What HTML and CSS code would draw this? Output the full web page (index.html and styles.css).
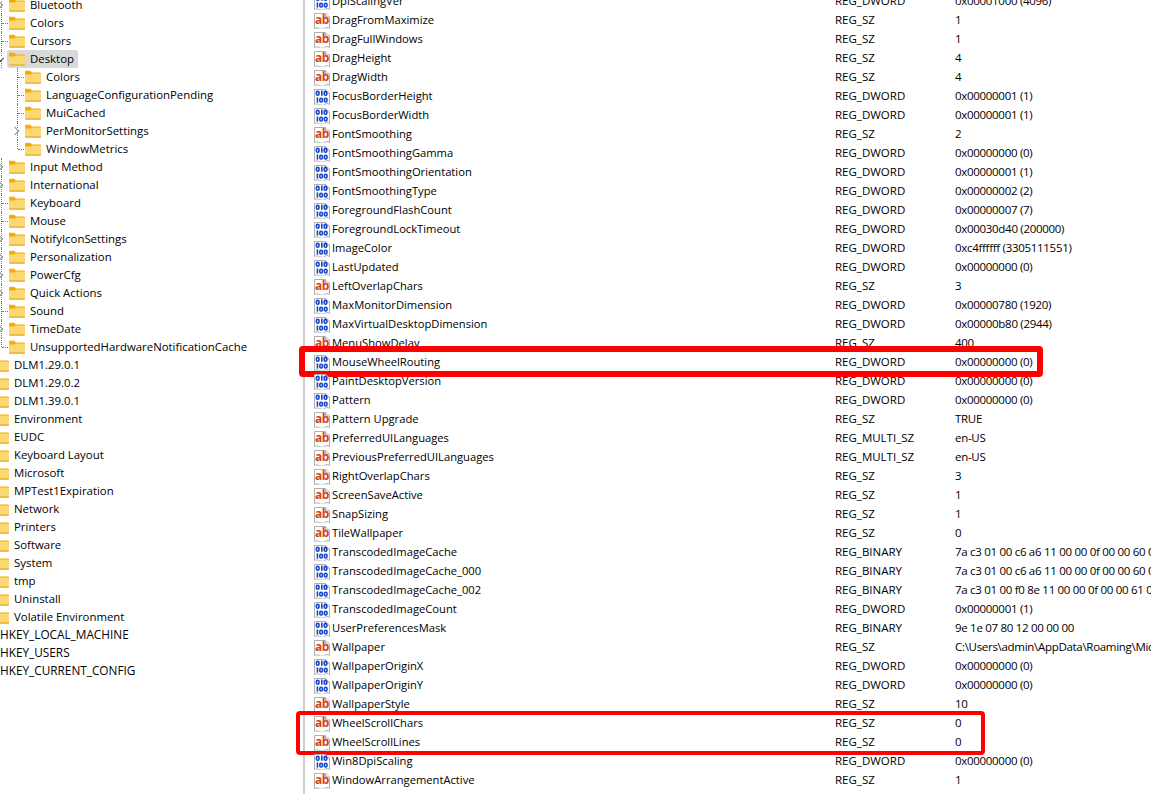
FILE: index.html
```html
<!DOCTYPE html>
<html lang="en">
<head>
<meta charset="utf-8">
<title>Registry Editor</title>
<link rel="stylesheet" href="styles.css">
</head>
<body>
<svg class="defs" width="0" height="0" aria-hidden="true">
  <symbol id="folder" viewBox="0 0 16 16">
    <path d="M0 3C0 2.3.5 1.8 1.2 1.8h4L7 3.4h8c.6 0 1 .4 1 1V6H0z" fill="#f5ad00"/>
    <path d="M0 5.4h5.6L7 4.4h8c.6 0 1 .4 1 1v8.4c0 .7-.5 1.2-1.2 1.2H1.2C.5 15 0 14.5 0 13.8z" fill="#fcd874"/>
    <path d="M0 13.6c0 .8.5 1.4 1.2 1.4h13.6c.7 0 1.2-.6 1.2-1.4V13H0z" fill="#f0bd45"/>
  </symbol>
  <symbol id="sheet" viewBox="0 0 16 16">
    <path d="M.5 .5h11l4 3.5v11.5c-2-1.3-3-1.3-5 0s-3 .8-5 0-3-.8-5 0z" fill="#fff" stroke="#b0b0b0"/>
    <path d="M11.5 .5v3.5h4" fill="#eee" stroke="#b0b0b0"/>
  </symbol>
  <symbol id="ab" viewBox="0 0 16 16">
    <use href="#sheet"/>
    <text x="1" y="10.8" class="ab-text">ab</text>
  </symbol>
  <symbol id="bin" viewBox="0 0 16 16">
    <use href="#sheet"/>
    <g fill="none" stroke="#1846c8" stroke-width="1.6">
      <rect x="2.4" y="2.4" width="2.6" height="3.8" rx="1.2"/>
      <path d="M7.8 1.6v5.2"/>
      <rect x="10.2" y="2.4" width="2.6" height="3.8" rx="1.2"/>
      <path d="M3.4 8.4v5.2"/>
      <rect x="5.8" y="9.2" width="2.6" height="3.8" rx="1.2"/>
      <rect x="10.4" y="9.2" width="2.6" height="3.8" rx="1.2"/>
    </g>
  </symbol>
</svg>
<main class="window">
  <nav class="tree">
    <div class="node lvl2 open-line"><span class="chev"></span><span class="label"><svg class="folder"><use href="#folder"/></svg>Bluetooth</span></div>
    <div class="node lvl2 leaf"><span class="label"><svg class="folder"><use href="#folder"/></svg>Colors</span></div>
    <div class="node lvl2 leaf"><span class="label"><svg class="folder"><use href="#folder"/></svg>Cursors</span></div>
    <div class="node lvl2"><span class="chev down"></span><span class="label selected"><svg class="folder"><use href="#folder"/></svg>Desktop</span></div>
    <div class="node lvl3 leaf sub"><span class="label"><svg class="folder"><use href="#folder"/></svg>Colors</span></div>
    <div class="node lvl3 leaf sub"><span class="label"><svg class="folder"><use href="#folder"/></svg>LanguageConfigurationPending</span></div>
    <div class="node lvl3 leaf sub"><span class="label"><svg class="folder"><use href="#folder"/></svg>MuiCached</span></div>
    <div class="node lvl3 sub"><span class="chev"></span><span class="label"><svg class="folder"><use href="#folder"/></svg>PerMonitorSettings</span></div>
    <div class="node lvl3 leaf sub last"><span class="label"><svg class="folder"><use href="#folder"/></svg>WindowMetrics</span></div>
    <div class="node lvl2"><span class="chev"></span><span class="label"><svg class="folder"><use href="#folder"/></svg>Input Method</span></div>
    <div class="node lvl2"><span class="chev"></span><span class="label"><svg class="folder"><use href="#folder"/></svg>International</span></div>
    <div class="node lvl2 leaf"><span class="label"><svg class="folder"><use href="#folder"/></svg>Keyboard</span></div>
    <div class="node lvl2 leaf"><span class="label"><svg class="folder"><use href="#folder"/></svg>Mouse</span></div>
    <div class="node lvl2"><span class="chev"></span><span class="label"><svg class="folder"><use href="#folder"/></svg>NotifyIconSettings</span></div>
    <div class="node lvl2"><span class="chev"></span><span class="label"><svg class="folder"><use href="#folder"/></svg>Personalization</span></div>
    <div class="node lvl2"><span class="chev"></span><span class="label"><svg class="folder"><use href="#folder"/></svg>PowerCfg</span></div>
    <div class="node lvl2"><span class="chev"></span><span class="label"><svg class="folder"><use href="#folder"/></svg>Quick Actions</span></div>
    <div class="node lvl2 leaf"><span class="label"><svg class="folder"><use href="#folder"/></svg>Sound</span></div>
    <div class="node lvl2"><span class="chev"></span><span class="label"><svg class="folder"><use href="#folder"/></svg>TimeDate</span></div>
    <div class="node lvl2 leaf end"><span class="label"><svg class="folder"><use href="#folder"/></svg>UnsupportedHardwareNotificationCache</span></div>
    <div class="node lvl1"><span class="label"><svg class="folder"><use href="#folder"/></svg>DLM1.29.0.1</span></div>
    <div class="node lvl1"><span class="label"><svg class="folder"><use href="#folder"/></svg>DLM1.29.0.2</span></div>
    <div class="node lvl1"><span class="label"><svg class="folder"><use href="#folder"/></svg>DLM1.39.0.1</span></div>
    <div class="node lvl1"><span class="label"><svg class="folder"><use href="#folder"/></svg>Environment</span></div>
    <div class="node lvl1"><span class="label"><svg class="folder"><use href="#folder"/></svg>EUDC</span></div>
    <div class="node lvl1"><span class="label"><svg class="folder"><use href="#folder"/></svg>Keyboard Layout</span></div>
    <div class="node lvl1"><span class="label"><svg class="folder"><use href="#folder"/></svg>Microsoft</span></div>
    <div class="node lvl1"><span class="label"><svg class="folder"><use href="#folder"/></svg>MPTest1Expiration</span></div>
    <div class="node lvl1"><span class="label"><svg class="folder"><use href="#folder"/></svg>Network</span></div>
    <div class="node lvl1"><span class="label"><svg class="folder"><use href="#folder"/></svg>Printers</span></div>
    <div class="node lvl1"><span class="label"><svg class="folder"><use href="#folder"/></svg>Software</span></div>
    <div class="node lvl1"><span class="label"><svg class="folder"><use href="#folder"/></svg>System</span></div>
    <div class="node lvl1"><span class="label"><svg class="folder"><use href="#folder"/></svg>tmp</span></div>
    <div class="node lvl1"><span class="label"><svg class="folder"><use href="#folder"/></svg>Uninstall</span></div>
    <div class="node lvl1"><span class="label"><svg class="folder"><use href="#folder"/></svg>Volatile Environment</span></div>
    <div class="node lvl0"><span class="label"><svg class="folder"><use href="#folder"/></svg>HKEY_LOCAL_MACHINE</span></div>
    <div class="node lvl0"><span class="label"><svg class="folder"><use href="#folder"/></svg>HKEY_USERS</span></div>
    <div class="node lvl0"><span class="label"><svg class="folder"><use href="#folder"/></svg>HKEY_CURRENT_CONFIG</span></div>
  </nav>
  <section class="values">
    <div class="row"><svg class="ico"><use href="#bin"/></svg><span class="name">DpiScalingVer</span><span class="type">REG_DWORD</span><span class="data">0x00001000 (4096)</span></div>
    <div class="row"><svg class="ico"><use href="#ab"/></svg><span class="name">DragFromMaximize</span><span class="type">REG_SZ</span><span class="data">1</span></div>
    <div class="row"><svg class="ico"><use href="#ab"/></svg><span class="name">DragFullWindows</span><span class="type">REG_SZ</span><span class="data">1</span></div>
    <div class="row"><svg class="ico"><use href="#ab"/></svg><span class="name">DragHeight</span><span class="type">REG_SZ</span><span class="data">4</span></div>
    <div class="row"><svg class="ico"><use href="#ab"/></svg><span class="name">DragWidth</span><span class="type">REG_SZ</span><span class="data">4</span></div>
    <div class="row"><svg class="ico"><use href="#bin"/></svg><span class="name">FocusBorderHeight</span><span class="type">REG_DWORD</span><span class="data">0x00000001 (1)</span></div>
    <div class="row"><svg class="ico"><use href="#bin"/></svg><span class="name">FocusBorderWidth</span><span class="type">REG_DWORD</span><span class="data">0x00000001 (1)</span></div>
    <div class="row"><svg class="ico"><use href="#ab"/></svg><span class="name">FontSmoothing</span><span class="type">REG_SZ</span><span class="data">2</span></div>
    <div class="row"><svg class="ico"><use href="#bin"/></svg><span class="name">FontSmoothingGamma</span><span class="type">REG_DWORD</span><span class="data">0x00000000 (0)</span></div>
    <div class="row"><svg class="ico"><use href="#bin"/></svg><span class="name">FontSmoothingOrientation</span><span class="type">REG_DWORD</span><span class="data">0x00000001 (1)</span></div>
    <div class="row"><svg class="ico"><use href="#bin"/></svg><span class="name">FontSmoothingType</span><span class="type">REG_DWORD</span><span class="data">0x00000002 (2)</span></div>
    <div class="row"><svg class="ico"><use href="#bin"/></svg><span class="name">ForegroundFlashCount</span><span class="type">REG_DWORD</span><span class="data">0x00000007 (7)</span></div>
    <div class="row"><svg class="ico"><use href="#bin"/></svg><span class="name">ForegroundLockTimeout</span><span class="type">REG_DWORD</span><span class="data">0x00030d40 (200000)</span></div>
    <div class="row"><svg class="ico"><use href="#bin"/></svg><span class="name">ImageColor</span><span class="type">REG_DWORD</span><span class="data">0xc4ffffff (3305111551)</span></div>
    <div class="row"><svg class="ico"><use href="#bin"/></svg><span class="name">LastUpdated</span><span class="type">REG_DWORD</span><span class="data">0x00000000 (0)</span></div>
    <div class="row"><svg class="ico"><use href="#ab"/></svg><span class="name">LeftOverlapChars</span><span class="type">REG_SZ</span><span class="data">3</span></div>
    <div class="row"><svg class="ico"><use href="#bin"/></svg><span class="name">MaxMonitorDimension</span><span class="type">REG_DWORD</span><span class="data">0x00000780 (1920)</span></div>
    <div class="row"><svg class="ico"><use href="#bin"/></svg><span class="name">MaxVirtualDesktopDimension</span><span class="type">REG_DWORD</span><span class="data">0x00000b80 (2944)</span></div>
    <div class="row"><svg class="ico"><use href="#ab"/></svg><span class="name">MenuShowDelay</span><span class="type">REG_SZ</span><span class="data">400</span></div>
    <div class="row"><svg class="ico"><use href="#bin"/></svg><span class="name">MouseWheelRouting</span><span class="type">REG_DWORD</span><span class="data">0x00000000 (0)</span><div class="mark mark-one"></div></div>
    <div class="row"><svg class="ico"><use href="#bin"/></svg><span class="name">PaintDesktopVersion</span><span class="type">REG_DWORD</span><span class="data">0x00000000 (0)</span></div>
    <div class="row"><svg class="ico"><use href="#bin"/></svg><span class="name">Pattern</span><span class="type">REG_DWORD</span><span class="data">0x00000000 (0)</span></div>
    <div class="row"><svg class="ico"><use href="#ab"/></svg><span class="name">Pattern Upgrade</span><span class="type">REG_SZ</span><span class="data">TRUE</span></div>
    <div class="row"><svg class="ico"><use href="#ab"/></svg><span class="name">PreferredUILanguages</span><span class="type">REG_MULTI_SZ</span><span class="data">en-US</span></div>
    <div class="row"><svg class="ico"><use href="#ab"/></svg><span class="name">PreviousPreferredUILanguages</span><span class="type">REG_MULTI_SZ</span><span class="data">en-US</span></div>
    <div class="row"><svg class="ico"><use href="#ab"/></svg><span class="name">RightOverlapChars</span><span class="type">REG_SZ</span><span class="data">3</span></div>
    <div class="row"><svg class="ico"><use href="#ab"/></svg><span class="name">ScreenSaveActive</span><span class="type">REG_SZ</span><span class="data">1</span></div>
    <div class="row"><svg class="ico"><use href="#ab"/></svg><span class="name">SnapSizing</span><span class="type">REG_SZ</span><span class="data">1</span></div>
    <div class="row"><svg class="ico"><use href="#ab"/></svg><span class="name">TileWallpaper</span><span class="type">REG_SZ</span><span class="data">0</span></div>
    <div class="row"><svg class="ico"><use href="#bin"/></svg><span class="name">TranscodedImageCache</span><span class="type">REG_BINARY</span><span class="data">7a c3 01 00 c6 a6 11 00 00 0f 00 00 60 09 00 00</span></div>
    <div class="row"><svg class="ico"><use href="#bin"/></svg><span class="name">TranscodedImageCache_000</span><span class="type">REG_BINARY</span><span class="data">7a c3 01 00 c6 a6 11 00 00 0f 00 00 60 09 00 00</span></div>
    <div class="row"><svg class="ico"><use href="#bin"/></svg><span class="name">TranscodedImageCache_002</span><span class="type">REG_BINARY</span><span class="data">7a c3 01 00 f0 8e 11 00 00 0f 00 00 61 09 00 00</span></div>
    <div class="row"><svg class="ico"><use href="#bin"/></svg><span class="name">TranscodedImageCount</span><span class="type">REG_DWORD</span><span class="data">0x00000001 (1)</span></div>
    <div class="row"><svg class="ico"><use href="#bin"/></svg><span class="name">UserPreferencesMask</span><span class="type">REG_BINARY</span><span class="data">9e 1e 07 80 12 00 00 00</span></div>
    <div class="row"><svg class="ico"><use href="#ab"/></svg><span class="name">Wallpaper</span><span class="type">REG_SZ</span><span class="data">C:\Users\admin\AppData\Roaming\Microsoft\Windows\Themes\TranscodedWallpaper</span></div>
    <div class="row"><svg class="ico"><use href="#bin"/></svg><span class="name">WallpaperOriginX</span><span class="type">REG_DWORD</span><span class="data">0x00000000 (0)</span></div>
    <div class="row"><svg class="ico"><use href="#bin"/></svg><span class="name">WallpaperOriginY</span><span class="type">REG_DWORD</span><span class="data">0x00000000 (0)</span></div>
    <div class="row"><svg class="ico"><use href="#ab"/></svg><span class="name">WallpaperStyle</span><span class="type">REG_SZ</span><span class="data">10</span></div>
    <div class="row"><svg class="ico"><use href="#ab"/></svg><span class="name">WheelScrollChars</span><span class="type">REG_SZ</span><span class="data">0</span><div class="mark mark-two"></div></div>
    <div class="row"><svg class="ico"><use href="#ab"/></svg><span class="name">WheelScrollLines</span><span class="type">REG_SZ</span><span class="data">0</span></div>
    <div class="row"><svg class="ico"><use href="#bin"/></svg><span class="name">Win8DpiScaling</span><span class="type">REG_DWORD</span><span class="data">0x00000000 (0)</span></div>
    <div class="row"><svg class="ico"><use href="#ab"/></svg><span class="name">WindowArrangementActive</span><span class="type">REG_SZ</span><span class="data">1</span></div>
  </section>
</main>
</body>
</html>
```
FILE: styles.css
```css
html, body {
  margin: 0;
  height: 100%;
  overflow: hidden;
  background: #fff;
}

.defs {
  display: block;
  height: 0;
}

.ab-text {
  font: 700 12px "Open Sans", sans-serif;
  letter-spacing: -0.4px;
  fill: #d4421c;
}

.window {
  display: flex;
  height: 794px;
  overflow: hidden;
  font-family: "Open Sans", sans-serif;
  color: #000;
}

/* Tree pane */
.tree {
  flex: 0 0 303px;
  overflow: hidden;
  font-size: 11.4px;
}

.tree .node:first-child {
  margin-top: -4px;
}

.node {
  position: relative;
  display: flex;
  align-items: center;
  height: 18px;
  white-space: nowrap;
}

.lvl0 { padding-left: 0; font-size: 11.8px; }
.lvl1 { padding-left: 0; }
.lvl2 { padding-left: 7px; }
.lvl3 { padding-left: 23px; }

.lvl0 .label { margin-left: -23px; }
.lvl1 .label { margin-left: -9px; }

.label {
  display: inline-flex;
  align-items: center;
  box-sizing: border-box;
  height: 18px;
  padding: 0 4px 2px 2px;
  border-radius: 2px;
}

.label.selected {
  background: #d9d9d9;
}

.folder {
  width: 16px;
  height: 16px;
  margin: 0 5px -2px 0;
  flex: none;
}

/* Tree connector lines */
.lvl2::before {
  content: "";
  position: absolute;
  left: 1px;
  top: 0;
  bottom: 0;
  border-left: 1px dotted #777;
}

.lvl2.end::before {
  bottom: 9px;
}

.leaf.lvl2::after {
  content: "";
  position: absolute;
  left: 2px;
  width: 6px;
  top: 9px;
  border-top: 1px dotted #777;
}

.sub::before {
  content: "";
  position: absolute;
  left: 17px;
  top: 0;
  bottom: 0;
  border-left: 1px dotted #777;
}

.sub.last::before {
  bottom: 9px;
}

.leaf.sub::after {
  content: "";
  position: absolute;
  left: 18px;
  width: 6px;
  top: 9px;
  border-top: 1px dotted #777;
}

.chev {
  position: absolute;
  left: -4px;
  top: 6px;
  width: 5px;
  height: 5px;
  border-top: 1.5px solid #8a8a8a;
  border-right: 1.5px solid #8a8a8a;
  background: #fff;
  transform: rotate(45deg);
  z-index: 1;
}

.lvl3 .chev {
  left: 12px;
}

.chev.down {
  left: -2px;
  top: 6px;
  width: 4px;
  height: 4px;
  background: #fff;
  border-color: #333;
  transform: rotate(135deg);
}

/* Values pane */
.values {
  flex: 1;
  min-width: 0;
  border-left: 2px solid #cfcfcf;
  position: relative;
}

.row {
  position: relative;
  display: flex;
  align-items: center;
  height: 19px;
  padding-left: 9px;
  white-space: nowrap;
}

.row:first-child {
  margin-top: -8px;
}

.ico {
  flex: none;
  width: 16px;
  height: 16px;
  margin-right: 2px;
}

.name {
  flex: 0 0 503px;
  font-size: 11.2px;
  margin-bottom: 2px;
}

.type {
  flex: 0 0 120px;
  font-size: 11.5px;
  margin-bottom: 2px;
}

.data {
  flex: none;
  font-size: 11.5px;
  letter-spacing: -0.3px;
  margin-bottom: 2px;
}

/* Red annotation boxes */
.mark {
  position: absolute;
  border-style: solid;
  border-color: #f00;
  border-radius: 4px;
  box-sizing: border-box;
  pointer-events: none;
}

.mark-one {
  left: -6px;
  width: 744px;
  top: -7px;
  height: 31px;
  border-width: 6px;
}

.mark-two {
  left: -9px;
  width: 689px;
  top: -3px;
  height: 44px;
  border-width: 4px;
}
```
